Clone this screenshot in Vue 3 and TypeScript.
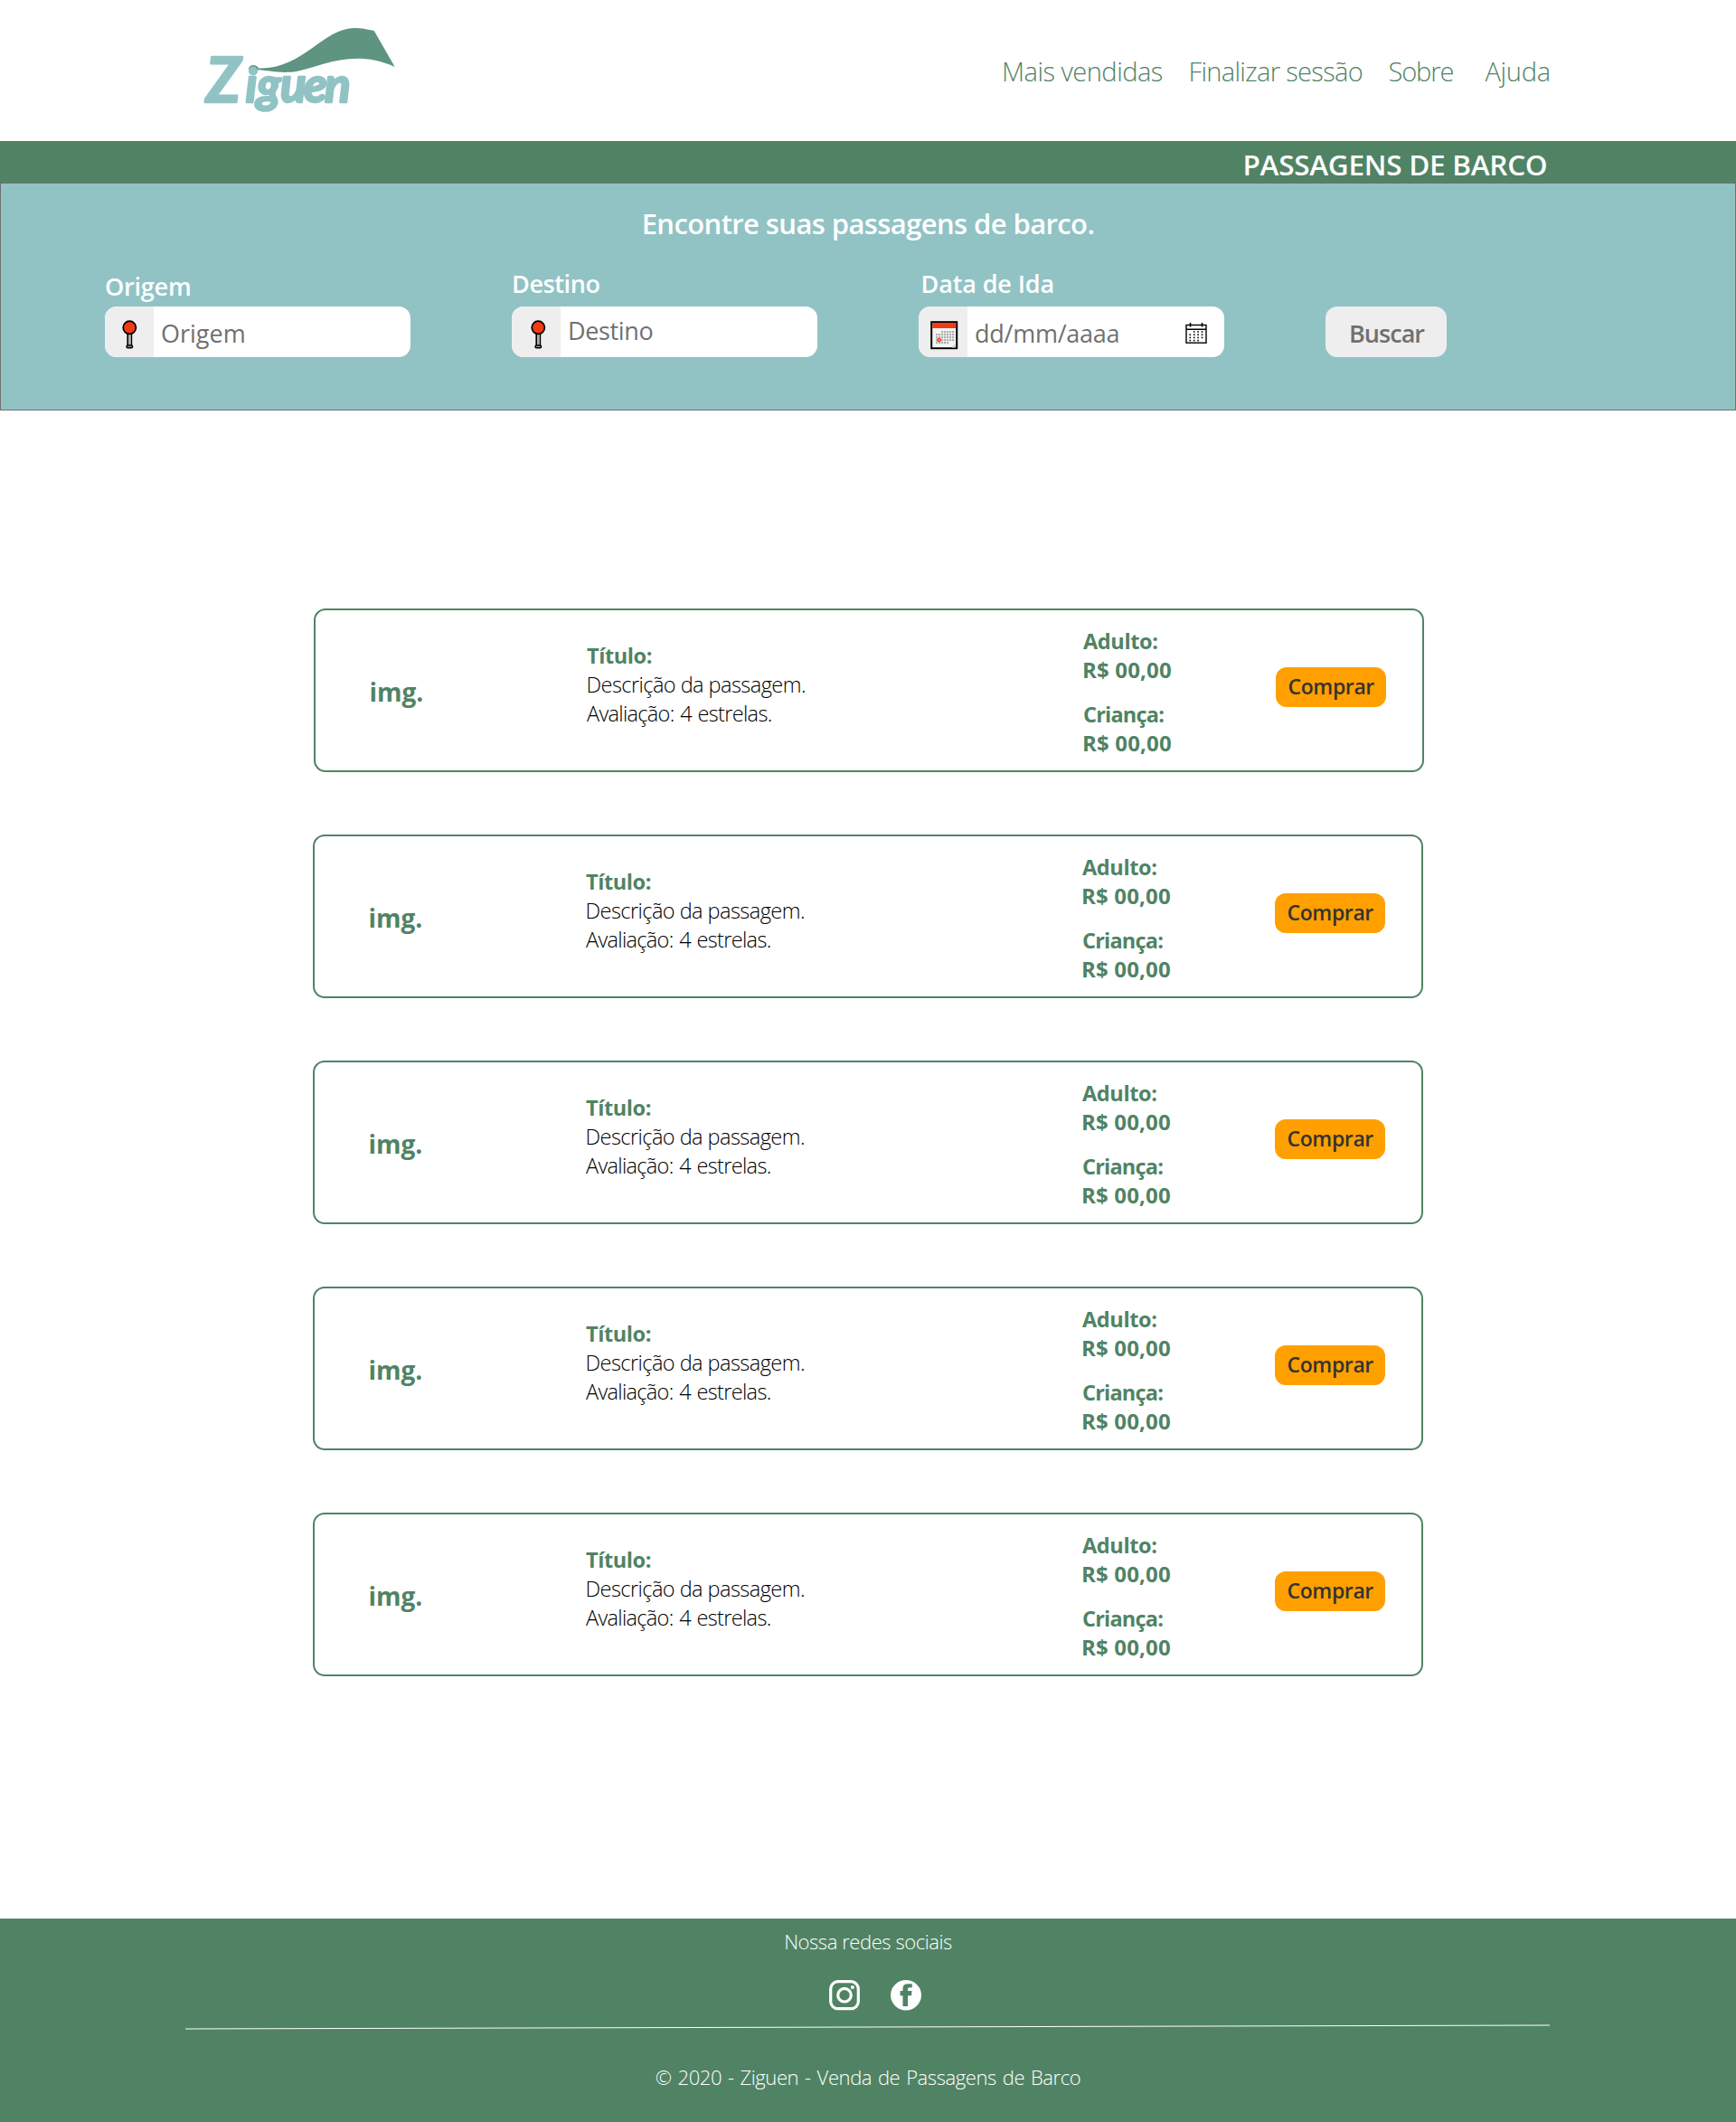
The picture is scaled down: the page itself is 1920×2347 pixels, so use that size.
<script setup lang="ts">
interface Ticket {
  id: number
  title: string
  description: string
  rating: string
  adult: string
  child: string
}

const tickets: Ticket[] = Array.from({ length: 5 }, (_, i) => ({
  id: i + 1,
  title: 'Título:',
  description: 'Descrição da passagem.',
  rating: 'Avaliação: 4 estrelas.',
  adult: 'R$ 00,00',
  child: 'R$ 00,00',
}))

// Day marks of the two calendar glyphs: rows of [first column, last column]
const days = (rows: [number, number][]) =>
  rows.flatMap(([a, b], r) => Array.from({ length: b - a + 1 }, (_, i) => ({ c: a + i, r })))
const redDays = days([[2, 6], [0, 6], [0, 6], [0, 6], [0, 4]])
const lineDays = days([[1, 3], [0, 3], [0, 3], [0, 2]])
</script>

<template>
  <div class="page">
    <header class="header">
      <svg class="logo" viewBox="0 0 260 146" width="260" height="146">
        <g class="wordmark">
          <text class="cap" x="28" y="102.500">Z</text>
          <text x="71.500 84 110 136 159" y="102.500">iguen</text>
        </g>
        <path
          fill="#5e9480"
          d="M75 66C76 61 84 61 86 65.500C134 67 157 22 191 21C201 21 206 22.500 213.700 24L236.700 64C190 43 155 64 128 69C110 71.500 98 68 86 67.300Z"
        />
        <circle cx="80" cy="68.500" r="5" fill="#91c3c5" />
      </svg>
      <nav class="nav">
        <a class="n1">Mais vendidas</a>
        <a class="n2">Finalizar sessão</a>
        <a class="n3">Sobre</a>
        <a class="n4">Ajuda</a>
      </nav>
    </header>

    <div class="strip">PASSAGENS DE BARCO</div>

    <section class="search">
      <h1>Encontre suas passagens de barco.</h1>
      <form class="form">
        <div class="field">
          <label class="low">Origem</label>
          <div class="input">
            <span class="addon">
              <svg width="54" height="56" viewBox="0 0 54 56">
                <path d="M25.200 29.500V43.500M29.400 29.500V43.500" stroke="#000" stroke-width="1.600" />
                <path d="M27.300 30V44" stroke="#aaa" stroke-width="2.400" />
                <rect x="24" y="43" width="6.600" height="2.800" rx="1.400" fill="#999" stroke="#000" stroke-width="1.500" />
                <circle cx="27.300" cy="23.300" r="7.100" fill="#f23a15" stroke="#000" stroke-width="1.700" />
              </svg>
            </span>
            <span class="hint origin">Origem</span>
          </div>
        </div>
        <div class="field">
          <label class="dest-label">Destino</label>
          <div class="input">
            <span class="addon">
              <svg width="54" height="56" viewBox="-2 0 54 56">
                <path d="M25.200 29.500V43.500M29.400 29.500V43.500" stroke="#000" stroke-width="1.600" />
                <path d="M27.300 30V44" stroke="#aaa" stroke-width="2.400" />
                <rect x="24" y="43" width="6.600" height="2.800" rx="1.400" fill="#999" stroke="#000" stroke-width="1.500" />
                <circle cx="27.300" cy="23.300" r="7.100" fill="#f23a15" stroke="#000" stroke-width="1.700" />
              </svg>
            </span>
            <span class="hint dest">Destino</span>
          </div>
        </div>
        <div class="field">
          <label class="date-label">Data de Ida</label>
          <div class="input">
            <span class="addon">
              <svg width="54" height="56" viewBox="0 0 54 56">
                <rect x="14.200" y="17.200" width="28" height="29" fill="#f4f4f4" stroke="#000" stroke-width="2" />
                <rect x="15.200" y="18" width="26" height="6" fill="#f23a15" />
                <rect
                  v-for="d in redDays"
                  :key="`${d.c}-${d.r}`"
                  :x="19 + d.c * 3"
                  :y="27 + d.r * 3"
                  width="2.200"
                  height="2.200"
                  fill="#b0b0b0"
                />
                <circle cx="22.700" cy="37" r="1.700" fill="#f8b5a5" stroke="#f23a15" stroke-width="1.300" />
                <path d="M40.500 41.500v4H36.500z" fill="#ccc" />
              </svg>
            </span>
            <span class="hint date">dd/mm/aaaa</span>
            <svg class="picker" width="26" height="24" viewBox="0 0 26 24" fill="none" stroke="#000">
              <rect x="2" y="2.500" width="22" height="19.700" stroke-width="1.400" />
              <path d="M2 7.300h22" stroke-width="1.600" />
              <path d="M6.500 0v4.500M19.500 0v4.500" stroke-width="1.600" />
              <rect
                v-for="d in lineDays"
                :key="`${d.c}-${d.r}`"
                :x="5.500 + d.c * 4.400"
                :y="9.200 + d.r * 3.200"
                width="1.600"
                height="1.600"
                fill="#000"
                stroke="none"
              />
            </svg>
          </div>
        </div>
        <button type="button" class="go">Buscar</button>
      </form>
    </section>

    <main class="list">
      <article v-for="t in tickets" :key="t.id" class="card">
        <div class="thumb">img.</div>
        <div class="info">
          <h2>{{ t.title }}</h2>
          <p class="desc">{{ t.description }}</p>
          <p class="rating">{{ t.rating }}</p>
        </div>
        <div class="prices">
          <p class="adult">Adulto:</p>
          <p class="value">{{ t.adult }}</p>
          <p class="child">Criança:</p>
          <p class="value">{{ t.child }}</p>
        </div>
        <button type="button" class="buy">Comprar</button>
      </article>
    </main>

    <footer class="footer">
      <p class="social">Nossa redes sociais</p>
      <div class="icons">
        <svg width="34" height="34" viewBox="0 0 34 34" fill="none" stroke="#fff">
          <rect x="1.700" y="1.700" width="30.600" height="30" rx="8" stroke-width="3.200" />
          <circle cx="17" cy="16.700" r="7.300" stroke-width="3.200" />
          <circle cx="25.900" cy="8" r="2.100" fill="#fff" stroke="none" />
        </svg>
        <svg width="34" height="34" viewBox="0 0 34 34">
          <ellipse cx="17" cy="16.700" rx="17" ry="16.700" fill="#fff" />
          <path
            fill="#508364"
            d="M13.500 29V17.300h-2.900V12h2.900V9.500C13.500 6 15.300 4.200 18.800 4.200h5v4h-2.700C19.500 8.200 19 8.900 19 10.200V12h4.500l-.5 5.300h-4V29z"
          />
        </svg>
      </div>
      <svg class="rule" width="1511" height="6" viewBox="0 0 1511 6">
        <path d="M1 5L1510 1" stroke="#fff" stroke-width="1" />
      </svg>
      <p class="copy">© 2020 - Ziguen - Venda de Passagens de Barco</p>
    </footer>
  </div>
</template>

<style>
body {
  margin: 0;
  background: #fff;
}
</style>

<style scoped>
.page {
  width: 1920px;
  height: 2347px;
  display: flex;
  flex-direction: column;
  font-family: "Open Sans", "Noto Sans", sans-serif;
  overflow: hidden;
}
h1, h2, p {
  margin: 0;
}
button {
  border: 0;
  font-family: inherit;
  text-align: left;
  box-sizing: border-box;
}
.header {
  height: 156px;
  flex: none;
  display: flex;
}
.logo {
  margin: 10px 0 0 200px;
  flex: none;
}
.wordmark {
  font-family: Lato, sans-serif;
  font-weight: 700;
  font-style: italic;
  font-size: 53px;
  fill: #91c3c5;
  stroke: #91c3c5;
  stroke-width: 2.5px;
  stroke-linejoin: round;
}
.cap {
  font-size: 68px;
}
.nav {
  display: flex;
  margin-left: 648px;
  padding-top: 59px;
  font-size: 29px;
  font-weight: 300;
  line-height: 40px;
  color: #508364;
  white-space: nowrap;
}
.n1 { width: 206.5px; letter-spacing: -0.5px; }
.n2 { width: 221px; letter-spacing: -0.66px; }
.n3 { width: 107px; letter-spacing: -1.1px; }
.n4 { letter-spacing: -0.3px; }
.strip {
  height: 46px;
  flex: none;
  padding-left: 1374.5px;
  background: #508364;
  color: #fff;
  font-size: 31.5px;
  font-weight: 600;
  line-height: 52px;
  letter-spacing: -0.26px;
}
.search {
  height: 252px;
  flex: none;
  box-sizing: border-box;
  border: 1px solid #707070;
  background: #91c3c5;
  color: #fff;
  padding-top: 21px;
}
h1 {
  text-align: center;
  font-size: 31px;
  font-weight: 600;
  line-height: 46px;
  letter-spacing: -0.6px;
}
.form {
  display: flex;
  align-items: flex-end;
  gap: 112px;
  height: 125px;
  padding-left: 115px;
}
.field {
  width: 338px;
}
label {
  display: block;
  height: 69px;
  box-sizing: border-box;
  padding-top: 25px;
  font-size: 27px;
  font-weight: 600;
  line-height: 38px;
}
.low { padding-top: 28px; letter-spacing: -0.2px; }
.dest-label { letter-spacing: -0.4px; }
.date-label { padding-left: 2.5px; letter-spacing: -0.13px; }
.input {
  display: flex;
  height: 56px;
  border-radius: 13px;
  background: #fff;
  overflow: hidden;
}
.addon {
  width: 54px;
  flex: none;
  background: #eee;
}
.addon svg {
  display: block;
}
.hint {
  color: #707070;
  font-size: 27px;
  line-height: 59px;
}
.origin { padding-left: 8px; }
.dest { padding-left: 8px; line-height: 53px; letter-spacing: -0.35px; }
.date { padding-left: 8px; width: 169px; letter-spacing: -0.26px; }
.picker {
  margin: 18px 0 0 63px;
}
.go {
  width: 134px;
  height: 56px;
  padding: 0 0 0 26px;
  border-radius: 13px;
  background: #eee;
  color: #707070;
  font-size: 27px;
  font-weight: 600;
  line-height: 59px;
  letter-spacing: -0.96px;
}
.list {
  display: flex;
  flex-direction: column;
  gap: 69px;
  padding: 219px 0 0 346px;
}
.card {
  width: 1228px;
  height: 181px;
  box-sizing: border-box;
  border: 2px solid #508364;
  border-radius: 13px;
  display: flex;
  align-items: flex-start;
  color: #508364;
}
.card:first-child {
  margin-left: 1px;
}
.thumb {
  width: 240.5px;
  padding: 71px 0 0 59.5px;
  font-size: 28px;
  font-weight: 700;
  line-height: 38px;
}
.info {
  width: 549px;
  padding-top: 34px;
  font-size: 23.5px;
  line-height: 32px;
}
h2 {
  font-size: 23.5px;
  font-weight: 700;
  letter-spacing: -0.42px;
}
.desc,
.rating {
  color: #000;
  font-weight: 300;
}
.desc { margin-left: -0.5px; letter-spacing: -0.54px; }
.rating { letter-spacing: -0.68px; word-spacing: 1.2px; }
.prices {
  width: 213px;
  padding-top: 18px;
  font-size: 23.5px;
  font-weight: 700;
  line-height: 32px;
}
.adult { letter-spacing: -0.38px; }
.child { margin-top: 17px; letter-spacing: -0.8px; }
.value { margin-left: -1px; font-size: 24px; letter-spacing: 0.17px; }
.buy {
  width: 122px;
  height: 44px;
  margin-top: 63px;
  padding: 0 0 3px 13.5px;
  border-radius: 12px;
  background: #ffa000;
  color: #333;
  font-size: 23px;
  font-weight: 600;
  line-height: 40px;
  letter-spacing: -0.38px;
}
.footer {
  height: 225px;
  flex: none;
  margin-top: auto;
  background: #508364;
  color: #fff;
  font-size: 22px;
  font-weight: 300;
  line-height: 32px;
  text-align: center;
}
.social {
  padding-top: 9px;
  letter-spacing: -0.43px;
}
.icons {
  display: flex;
  gap: 34px;
  padding: 27px 0 0 917px;
}
.rule {
  display: block;
  margin: 15px 0 0 204px;
}
.copy {
  padding-top: 36px;
  letter-spacing: -0.42px;
  word-spacing: 1.6px;
}
</style>
